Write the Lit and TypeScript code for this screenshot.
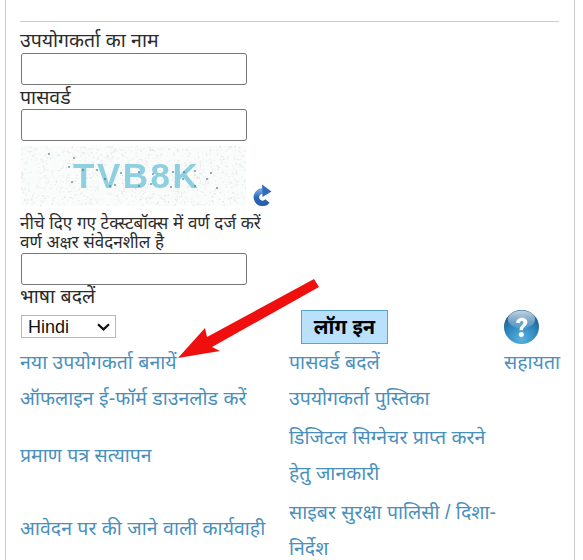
import { LitElement, html, css, svg } from "lit";
import { customElement } from "lit/decorators.js";

const seeded = (() => {
  let s = 12345;
  return () => {
    s = (s * 16807) % 2147483647;
    return s / 2147483647;
  };
})();
const specks = Array.from({ length: 1100 }, () => ({
  x: seeded() * 225,
  y: seeded() * 60,
  o: 0.06 + seeded() * 0.2,
}));
const inkDots = [
  [62, 24], [76, 24], [84, 33], [89, 40], [100, 27], [94, 39], [118, 26], [118, 40],
  [132, 28], [130, 38], [152, 26], [162, 33], [150, 41], [163, 26], [174, 25], [174, 40],
  [186, 33], [196, 42], [190, 27], [28, 8], [53, 12], [48, 21], [51, 36],
];

@customElement("app-root")
export class AppRoot extends LitElement {
  static styles = css`
    :host {
      display: block;
      width: 583px;
      height: 560px;
      overflow: hidden;
      background: #fff;
      font-family: "Liberation Sans", "Noto Sans", "DejaVu Sans", sans-serif;
      font-size: 19.5px;
      color: #2c2c2c;
      position: relative;
    }
    .panel {
      box-sizing: border-box;
      margin-left: 5px;
      width: 570px;
      height: 560px;
      border-left: 1px solid #ccc;
      border-right: 1px solid #ccc;
      padding: 21px 15px 0 14px;
    }
    .rule {
      height: 1px;
      background: #ccc;
      margin-bottom: 7px;
    }
    .label {
      height: 24px;
      line-height: 24px;
      white-space: nowrap;
    }
    .tight {
      line-height: 22px;
    }
    .hint {
      height: 19px;
      line-height: 19px;
      font-size: 17px;
      white-space: nowrap;
    }
    input {
      display: block;
      box-sizing: border-box;
      width: 226px;
      height: 32px;
      margin: 0 0 0 1px;
      border: 1px solid #767676;
      border-radius: 3px;
      background: #fff;
      padding: 0;
    }
    .captcha-row {
      display: flex;
      align-items: flex-end;
      gap: 6px;
      margin: 5px 0 8px 1px;
    }
    .captcha {
      display: block;
      width: 225px;
      height: 60px;
    }
    .captcha text {
      font-family: "Liberation Sans", sans-serif;
      font-size: 35px;
      font-weight: bold;
      letter-spacing: 2.5px;
      fill: #8fd0e0;
    }
    .refresh {
      display: block;
      width: 20px;
      height: 22px;
    }
    .hints {
      margin-bottom: 1px;
    }
    .grid {
      display: grid;
      grid-template-columns: 269px 215px auto;
      align-items: center;
    }
    .control {
      height: 35px;
      display: flex;
      align-items: center;
    }
    select {
      box-sizing: border-box;
      appearance: none;
      width: 95px;
      height: 23px;
      margin: 0 0 0 1px;
      border: 1px solid #a9bcc9;
      background: #fff
        url("data:image/svg+xml,%3Csvg xmlns='http://www.w3.org/2000/svg' width='13' height='8'%3E%3Cpath d='M1 1.2 L6.5 6.4 L12 1.2' fill='none' stroke='%23111' stroke-width='2.2'/%3E%3C/svg%3E")
        no-repeat 75px 7px;
      border-radius: 0;
      color: #111;
      font: 18px "Liberation Sans", sans-serif;
      padding: 0 0 0 6px;
    }
    .login {
      box-sizing: border-box;
      width: 87px;
      height: 34px;
      margin-left: 12px;
      border: 1px solid #5aa3cf;
      background: #b9e1fb;
      color: #000;
      font: bold 20px "Liberation Sans", "Noto Sans", sans-serif;
      padding: 0;
    }
    .help {
      display: block;
      width: 37px;
      height: 36px;
      margin-left: -1px;
    }
    a {
      color: #4a90bb;
      text-decoration: none;
      line-height: 36px;
      font-size: 19.5px;
    }
    .row {
      min-height: 36px;
    }
    .late {
      margin-top: 3px;
    }
    .raised {
      margin-bottom: 4px;
    }
    .wrap {
      width: 215px;
      display: block;
    }
    .arrow {
      position: absolute;
      left: 170px;
      top: 275px;
      width: 155px;
      height: 90px;
      pointer-events: none;
    }
  `;

  render() {
    return html`
      <div class="panel">
        <div class="rule"></div>
        <div class="label tight">उपयोगकर्ता का नाम</div>
        <input type="text" />
        <div class="label">पासवर्ड</div>
        <input type="password" />
        <div class="captcha-row">
          <svg class="captcha" viewBox="0 0 225 60" role="img" aria-label="captcha">
            <defs>
              <filter id="soft"><feGaussianBlur stdDeviation="0.6"></feGaussianBlur></filter>
            </defs>
            <rect width="225" height="60" fill="#fafbfb"></rect>
            ${specks.map(
              (p) => svg`<circle cx=${p.x.toFixed(1)} cy=${p.y.toFixed(1)} r="0.7" fill="#9aa8a8" opacity=${p.o.toFixed(2)}></circle>`
            )}
            <g filter="url(#soft)">
              <text x="52" y="42">TVB8K</text>
              ${inkDots.map(
                ([x, y]) => svg`<circle cx=${x} cy=${y} r="1" fill="#3d6f80" opacity="0.75"></circle>`
              )}
            </g>
          </svg>
          <svg class="refresh" viewBox="0 0 20 22">
            <defs>
              <linearGradient id="rg" x1="0" y1="0" x2="0" y2="1">
                <stop offset="0" stop-color="#6f9fdc"></stop>
                <stop offset="0.5" stop-color="#2a68bb"></stop>
                <stop offset="1" stop-color="#2a5fa8"></stop>
              </linearGradient>
            </defs>
            <path d="M10.5 7 A6.2 6.2 0 1 0 15.5 17" fill="none" stroke="url(#rg)" stroke-width="5.5"></path>
            <path d="M10 0.5 L19.5 7.5 L10.5 13 Z" fill="#2f6cbc"></path>
          </svg>
        </div>
        <div class="hints">
          <div class="hint">नीचे दिए गए टेक्स्टबॉक्स में वर्ण दर्ज करें</div>
          <div class="hint">वर्ण अक्षर संवेदनशील है</div>
        </div>
        <input type="text" />
        <div class="label tight">भाषा बदलें</div>
        <div class="grid">
          <div class="control">
            <select><option>Hindi</option></select>
          </div>
          <div class="control"><button class="login">लॉग इन</button></div>
          <div class="control">
            <svg class="help" viewBox="0 0 38 38" preserveAspectRatio="none">
              <defs>
                <radialGradient id="hg" cx="50%" cy="85%" r="75%">
                  <stop offset="0" stop-color="#5ab3e0"></stop>
                  <stop offset="0.6" stop-color="#2f86bd"></stop>
                  <stop offset="1" stop-color="#1d5f94"></stop>
                </radialGradient>
                <linearGradient id="hs" x1="0" y1="0" x2="0" y2="1">
                  <stop offset="0" stop-color="#fff" stop-opacity="0.75"></stop>
                  <stop offset="1" stop-color="#fff" stop-opacity="0.1"></stop>
                </linearGradient>
              </defs>
              <circle cx="19" cy="19" r="18" fill="url(#hg)"></circle>
              <ellipse cx="19" cy="11" rx="14" ry="9.5" fill="url(#hs)"></ellipse>
              <path d="M13.5 14.5 C14 7.5 25 7.5 25 14 C25 18 20.5 18.5 20.5 22.5 L17 22.5 C16.7 17.5 21 17 21 14.2 C21 11.6 17.6 11.7 17.2 14.8 Z" fill="#fff"></path>
              <circle cx="18.8" cy="27" r="2.6" fill="#fff"></circle>
            </svg>
          </div>

          <div class="row"><a href="#">नया उपयोगकर्ता बनायें</a></div>
          <div class="row"><a href="#">पासवर्ड बदलें</a></div>
          <div class="row"><a href="#">सहायता</a></div>

          <div class="row"><a href="#">ऑफलाइन ई-फॉर्म डाउनलोड करें</a></div>
          <div class="row"><a href="#">उपयोगकर्ता पुस्तिका</a></div>
          <div class="row"></div>

          <div class="row late"><a href="#">प्रमाण पत्र सत्यापन</a></div>
          <div class="row late"><a class="wrap" href="#">डिजिटल सिग्नेचर प्राप्त करने हेतु जानकारी</a></div>
          <div class="row late"></div>

          <div class="row late raised"><a href="#">आवेदन पर की जाने वाली कार्यवाही</a></div>
          <div class="row late"><a class="wrap" href="#">साइबर सुरक्षा पालिसी / दिशा-निर्देश</a></div>
          <div class="row late"></div>
        </div>
      </div>
      <svg class="arrow" viewBox="170 275 155 90">
        <path d="M178 358 L205 328 L207 337 L314 279 L319 287 L212 347 L220 351 Z" fill="#f00f0f"></path>
      </svg>
    `;
  }
}
